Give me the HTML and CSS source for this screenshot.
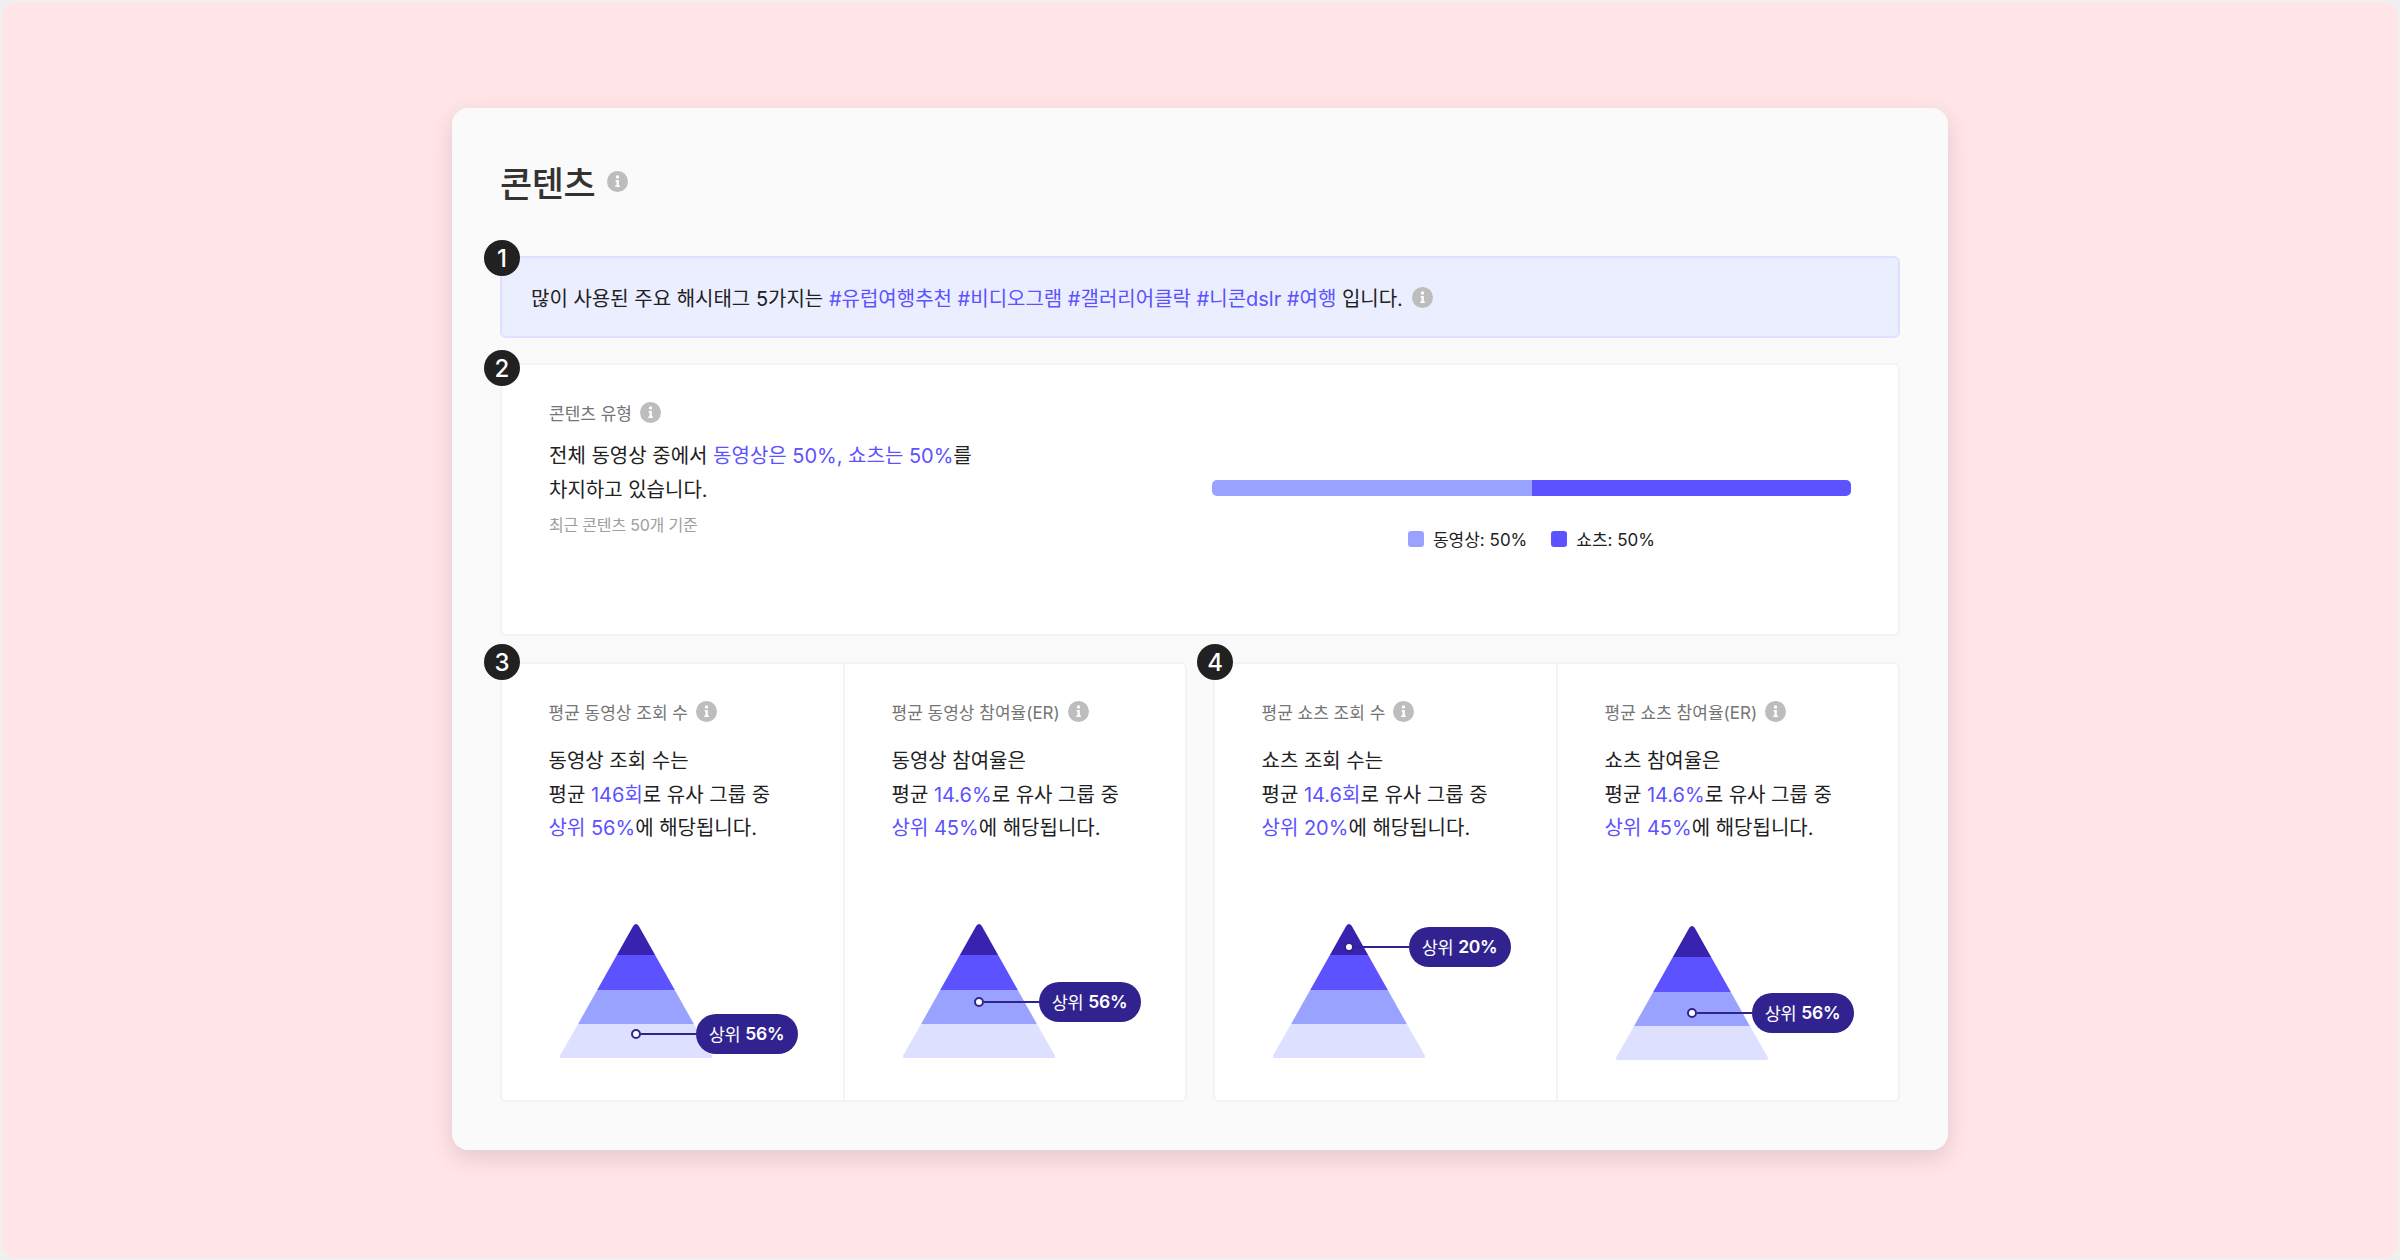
FILE: index.html
```html
<!DOCTYPE html>
<html lang="ko">
<head>
    <meta charset="UTF-8">
    <meta name="viewport" content="width=device-width, initial-scale=1.0">
    <title>콘텐츠</title>
    <link rel="stylesheet" href="styles.css">
</head>
<body>
    <svg class="sprites" aria-hidden="true">
        <symbol id="icon-info" viewBox="0 0 21 21">
            <circle cx="10.5" cy="10.5" r="10.5" fill="#bdbdbd"/>
            <circle cx="10.5" cy="6" r="1.7" fill="#fff"/>
            <path d="M8.6 9h3.2v5.6h1.1V16H8.2v-1.4h1.3v-4.2H8.6z" fill="#fff"/>
        </symbol>
        <symbol id="pyramid" viewBox="0 0 156 136">
            <path d="M58.9 31L75.2 2Q78 -2 80.8 2L97.1 31Z" fill="#3823b0"/>
            <path d="M58.9 31H97.1L116.8 66H39.2Z" fill="#5c52ff"/>
            <path d="M39.2 66H116.8L135.9 100H20.1Z" fill="#99a3ff"/>
            <path d="M20.1 100H135.9L153.6 131Q155 134 152.5 134H3.5Q1 134 2.4 131Z" fill="#dde0ff"/>
        </symbol>
    </svg>

    <div class="page">
        <div class="card">
            <h1 class="title">콘텐츠 <svg class="info info-title"><use href="#icon-info"/></svg></h1>

            <div class="box alert">
                <span class="badge badge-1">1</span>
                <p>많이 사용된 주요 해시태그 5가지는 <em>#유럽여행추천 #비디오그램 #갤러리어클락 #니콘dslr #여행</em> 입니다.</p>
                <svg class="info"><use href="#icon-info"/></svg>
            </div>

            <div class="box type">
                <span class="badge badge-2">2</span>
                <div class="type-text">
                    <div class="label">콘텐츠 유형 <svg class="info"><use href="#icon-info"/></svg></div>
                    <p class="desc">전체 동영상 중에서 <em>동영상은 50%, 쇼츠는 50%</em>를<br>차지하고 있습니다.</p>
                    <p class="note">최근 콘텐츠 50개 기준</p>
                </div>
                <div class="type-chart">
                    <div class="bar">
                        <div class="bar-part video"></div>
                        <div class="bar-part shorts"></div>
                    </div>
                    <div class="legend">
                        <span class="legend-item"><i class="swatch video"></i>동영상: 50%</span>
                        <span class="legend-item"><i class="swatch shorts"></i>쇼츠: 50%</span>
                    </div>
                </div>
            </div>

            <div class="stats">
                <div class="box stat-group">
                    <span class="badge badge-3">3</span>
                    <div class="stat">
                        <div class="label">평균 동영상 조회 수 <svg class="info"><use href="#icon-info"/></svg></div>
                        <p class="desc">동영상 조회 수는<br>평균 <em>146회</em>로 유사 그룹 중<br><em>상위 56%</em>에 해당됩니다.</p>
                        <div class="pyramid">
                            <svg class="pyramid-img"><use href="#pyramid"/></svg>
                            <div class="marker marker-low">
                                <i class="dot"></i><i class="line"></i>
                                <span class="pill">상위 <b>56%</b></span>
                            </div>
                        </div>
                    </div>
                    <div class="stat">
                        <div class="label">평균 동영상 참여율(ER) <svg class="info"><use href="#icon-info"/></svg></div>
                        <p class="desc">동영상 참여율은<br>평균 <em>14.6%</em>로 유사 그룹 중<br><em>상위 45%</em>에 해당됩니다.</p>
                        <div class="pyramid">
                            <svg class="pyramid-img"><use href="#pyramid"/></svg>
                            <div class="marker marker-mid">
                                <i class="dot"></i><i class="line"></i>
                                <span class="pill">상위 <b>56%</b></span>
                            </div>
                        </div>
                    </div>
                </div>

                <div class="box stat-group">
                    <span class="badge badge-3">4</span>
                    <div class="stat">
                        <div class="label">평균 쇼츠 조회 수 <svg class="info"><use href="#icon-info"/></svg></div>
                        <p class="desc">쇼츠 조회 수는<br>평균 <em>14.6회</em>로 유사 그룹 중<br><em>상위 20%</em>에 해당됩니다.</p>
                        <div class="pyramid">
                            <svg class="pyramid-img"><use href="#pyramid"/></svg>
                            <div class="marker marker-top">
                                <i class="dot"></i><i class="line"></i>
                                <span class="pill">상위 <b>20%</b></span>
                            </div>
                        </div>
                    </div>
                    <div class="stat">
                        <div class="label">평균 쇼츠 참여율(ER) <svg class="info"><use href="#icon-info"/></svg></div>
                        <p class="desc">쇼츠 참여율은<br>평균 <em>14.6%</em>로 유사 그룹 중<br><em>상위 45%</em>에 해당됩니다.</p>
                        <div class="pyramid pyramid-shift">
                            <svg class="pyramid-img"><use href="#pyramid"/></svg>
                            <div class="marker marker-mid-low">
                                <i class="dot"></i><i class="line"></i>
                                <span class="pill">상위 <b>56%</b></span>
                            </div>
                        </div>
                    </div>
                </div>
            </div>
        </div>
    </div>
</body>
</html>
```

FILE: styles.css
```css
* {
    box-sizing: border-box;
}
body {
    margin: 0;
    background: #f0f0f0;
    font-family: Inter, "Noto Sans CJK KR", sans-serif;
    color: #212121;
}
p, h1 {
    margin: 0;
}
em {
    font-style: normal;
    color: #5c52ff;
}
i {
    display: block;
}
.sprites {
    display: none;
}
.page {
    display: flex;
    justify-content: center;
    align-items: center;
    height: 1260px;
    padding-bottom: 2px;
    background: #ffe4e8;
    border-radius: 16px;
    border: 2px solid #f0f0f0;
}
.card {
    width: 1496px;
    height: 1042px;
    padding: 48px;
    background: #fafafa;
    border-radius: 16px;
    box-shadow: 0 8px 24px rgba(0, 0, 0, 0.12);
}
.title {
    display: flex;
    align-items: center;
    gap: 12px;
    height: 50px;
    margin-bottom: 50px;
    font-size: 35px;
    font-weight: 500;
    letter-spacing: -0.5px;
    color: #333;
}
.info {
    flex: none;
    width: 21px;
    height: 21px;
}
.box {
    position: relative;
    background: #fff;
    border: 2px solid #f3f3f3;
    border-radius: 6px;
}
.badge {
    position: absolute;
    left: -18px;
    display: flex;
    justify-content: center;
    align-items: center;
    width: 36px;
    height: 36px;
    border-radius: 50%;
    background: #212121;
    color: #fff;
    font-size: 24px;
    font-weight: 500;
}
.badge-1 {
    top: -18px;
}
.badge-2 {
    top: -15px;
}
.badge-3 {
    top: -20px;
}
.alert {
    display: flex;
    align-items: center;
    gap: 9px;
    height: 82px;
    padding: 0 29px;
    background: #ebeeff;
    border-color: #dde0ff;
    font-size: 20px;
}
.type {
    display: flex;
    height: 273px;
    margin-top: 25px;
    padding: 35px 47px;
}
.label {
    display: flex;
    align-items: center;
    gap: 8px;
    height: 24px;
    font-size: 17px;
    color: #757575;
}
.desc {
    margin-top: 22px;
    font-size: 20px;
    line-height: 33.5px;
}
.type .desc {
    margin-top: 16px;
}
.note {
    margin-top: 5px;
    font-size: 16px;
    color: #9e9e9e;
    letter-spacing: -0.2px;
}
.type-chart {
    width: 639px;
    margin-left: auto;
    padding-top: 80px;
}
.bar {
    display: flex;
    height: 16px;
    border-radius: 5px;
    overflow: hidden;
}
.bar-part {
    flex: 1;
}
.video {
    background: #99a3ff;
}
.shorts {
    background: #5c52ff;
}
.legend {
    display: flex;
    justify-content: center;
    gap: 24px;
    margin-top: 30px;
    font-size: 17px;
}
.legend-item {
    display: flex;
    align-items: center;
    gap: 9px;
}
.swatch {
    width: 16px;
    height: 16px;
    border-radius: 3px;
}
.stats {
    display: grid;
    grid-template-columns: 1fr 1fr;
    gap: 26px;
    margin-top: 26px;
}
.stat-group {
    display: grid;
    grid-template-columns: 341px 1fr;
    height: 440px;
}
.stat {
    padding: 35px 46.5px 0;
}
.stat + .stat {
    border-left: 2px solid #f3f3f3;
}
.pyramid {
    position: relative;
    width: 156px;
    height: 136px;
    margin: 78px 0 0 9px;
}
.pyramid-shift {
    margin-top: 80px;
}
.pyramid-img {
    display: block;
    width: 156px;
    height: 136px;
}
.marker {
    position: absolute;
    left: 73px;
    display: flex;
    align-items: center;
}
.marker-low {
    top: 90px;
}
.marker-mid {
    top: 58px;
}
.marker-mid-low {
    top: 67px;
}
.marker-top {
    top: 3px;
}
.dot {
    width: 10px;
    height: 10px;
    border: 2px solid #31238f;
    border-radius: 50%;
    background: #fff;
}
.line {
    width: 55px;
    height: 2px;
    background: #31238f;
}
.pill {
    display: flex;
    justify-content: center;
    align-items: center;
    gap: 5px;
    width: 102px;
    height: 40px;
    border-radius: 20px;
    background: #31238f;
    color: #fff;
    font-size: 17.5px;
    letter-spacing: -0.3px;
    white-space: nowrap;
}
.pill b {
    font-weight: 600;
}
```
